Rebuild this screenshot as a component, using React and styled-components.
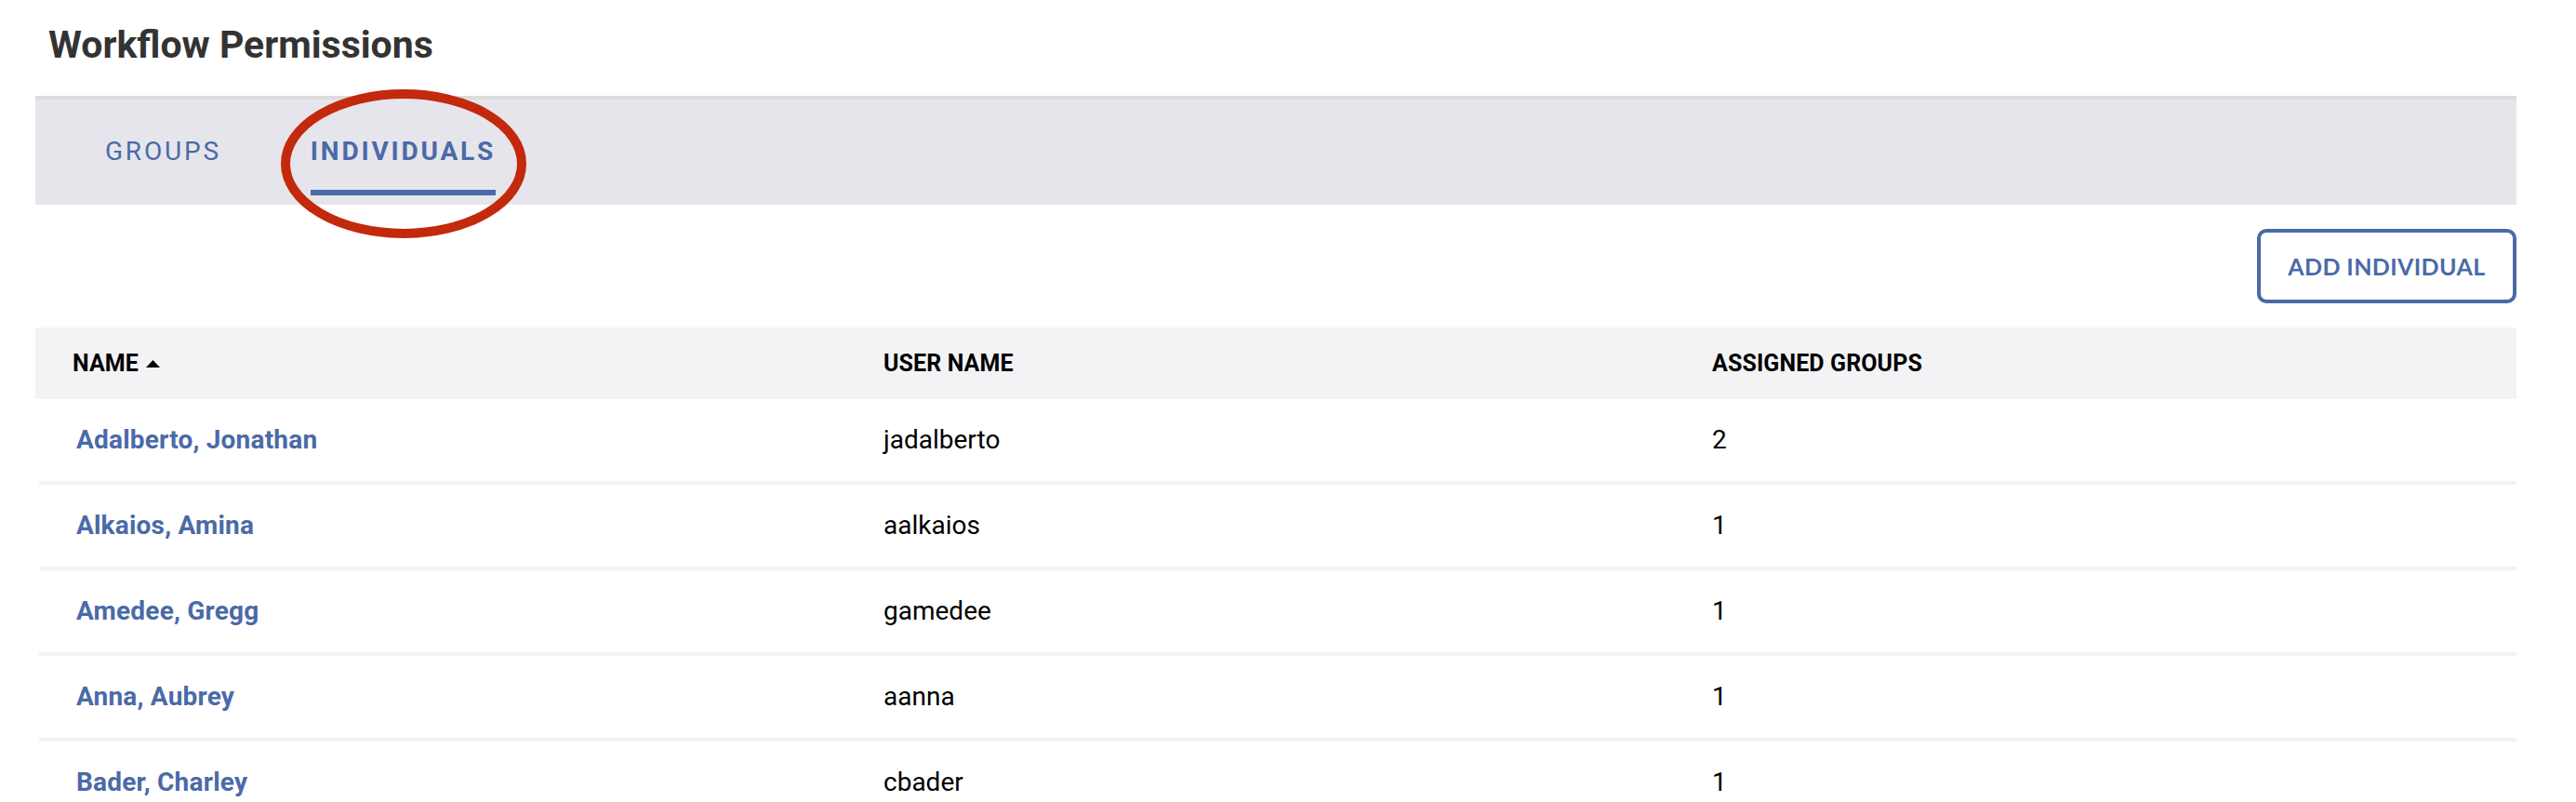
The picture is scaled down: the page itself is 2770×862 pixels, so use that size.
import styled, { createGlobalStyle } from "styled-components";

const blue = "#4a6aa8";

const GlobalStyle = createGlobalStyle`
  body {
    margin: 0;
    background: #ffffff;
    font-family: Roboto, "Liberation Sans", sans-serif;
  }
`;

const Page = styled.div`
  padding: 0 64px 0 38px;
`;

const TitleBar = styled.header`
  padding: 28px 0 34px 14px;

  h1 {
    margin: 0;
    font-size: 41px;
    line-height: 1;
    font-weight: 700;
    color: #333333;
  }
`;

/* tab strip */
const TabBar = styled.nav`
  position: relative;
  display: flex;
  gap: 96px;
  height: 113px;
  padding-left: 75px;
  border-top: 4px solid #dddcdd;
  background: #e7e5ec;
`;

const Tab = styled.div`
  display: flex;
  flex-direction: column;
  padding: 42px 0 10px;
  font-size: 28px;
  line-height: 1;
  letter-spacing: 2.8px;
  font-weight: ${(p) => (p.$active ? 700 : 400)};
  color: ${blue};
`;

const TabUnderline = styled.span`
  margin-top: auto;
  height: 6px;
  background: ${(p) => (p.$active ? blue : "transparent")};
`;

const Annotation = styled.svg`
  position: absolute;
  left: 264px;
  top: -11px;
  overflow: visible;
  pointer-events: none;
`;

const Toolbar = styled.div`
  display: flex;
  justify-content: flex-end;
  padding: 26px 0;
`;

const AddButton = styled.button`
  width: 279px;
  height: 80px;
  border: 4px solid ${blue};
  border-radius: 10px;
  background: #ffffff;
  color: ${blue};
  font-family: Lato, "Open Sans", sans-serif;
  font-size: 25px;
  font-weight: 700;
  letter-spacing: 0.4px;
`;

const HeadRow = styled.div`
  display: grid;
  grid-template-columns: 912px 891px 1fr;
  align-items: center;
  height: 77px;
  background: #f3f3f5;
`;

const HeadCell = styled.div`
  display: flex;
  align-items: center;
  gap: 8px;
  padding-left: ${(p) => (p.$first ? "40px" : "0")};
  font-size: 25px;
  line-height: 1;
  font-weight: 700;
  letter-spacing: 0.1px;
  color: #000000;
`;

const Row = styled.div`
  display: grid;
  grid-template-columns: 908px 891px 1fr;
  align-items: center;
  height: 88px;
  margin-left: 4px;
  border-bottom: 4px solid #f3f3f3;
`;

const NameLink = styled.a`
  padding-left: 40px;
  font-size: 28px;
  line-height: 1;
  font-weight: 700;
  letter-spacing: 0.2px;
  color: ${blue};
  text-decoration: none;
`;

const Cell = styled.div`
  font-size: 28px;
  line-height: 1;
  color: #000000;
`;

const people = [
  { name: "Adalberto, Jonathan", user: "jadalberto", groups: 2 },
  { name: "Alkaios, Amina", user: "aalkaios", groups: 1 },
  { name: "Amedee, Gregg", user: "gamedee", groups: 1 },
  { name: "Anna, Aubrey", user: "aanna", groups: 1 },
  { name: "Bader, Charley", user: "cbader", groups: 1 },
];

const SortUp = () => (
  <svg width="15" height="8" viewBox="0 0 15 8">
    <path d="M0 8 L7.5 0 L15 8 Z" fill="#000" />
  </svg>
);

const App = () => {
  return (
    <Page>
      <GlobalStyle />
      <TitleBar>
        <h1>Workflow Permissions</h1>
      </TitleBar>

      <TabBar>
        <Tab>
          GROUPS
          <TabUnderline />
        </Tab>
        <Tab $active>
          INDIVIDUALS
          <TabUnderline $active />
        </Tab>
        <Annotation width="264" height="160" viewBox="0 0 264 160">
          <ellipse cx="132" cy="80" rx="127" ry="75" fill="none" stroke="#c3290c" strokeWidth="10" />
        </Annotation>
      </TabBar>

      <Toolbar>
        <AddButton>ADD INDIVIDUAL</AddButton>
      </Toolbar>

      <HeadRow>
        <HeadCell $first>
          NAME <SortUp />
        </HeadCell>
        <HeadCell>USER NAME</HeadCell>
        <HeadCell>ASSIGNED GROUPS</HeadCell>
      </HeadRow>
      {people.map((p) => (
        <Row key={p.user}>
          <NameLink href="#">{p.name}</NameLink>
          <Cell>{p.user}</Cell>
          <Cell>{p.groups}</Cell>
        </Row>
      ))}
    </Page>
  );
};

export default App;
